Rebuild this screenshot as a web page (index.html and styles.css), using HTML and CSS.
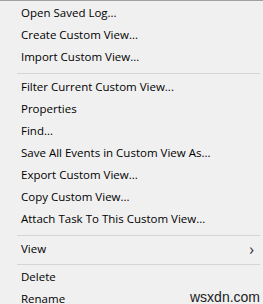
FILE: index.html
```html
<!DOCTYPE html>
<html>
<head>
<title>Context menu</title>
<link rel="stylesheet" href="styles.css">
</head>
<body>
<div class="menu">
	<div class="item">Open Saved Log...</div>
	<div class="item">Create Custom View...</div>
	<div class="item">Import Custom View...</div>
	<div class="sep"></div>
	<div class="item">Filter Current Custom View...</div>
	<div class="item">Properties</div>
	<div class="item">Find...</div>
	<div class="item">Save All Events in Custom View As...</div>
	<div class="item">Export Custom View...</div>
	<div class="item">Copy Custom View...</div>
	<div class="item">Attach Task To This Custom View...</div>
	<div class="sep"></div>
	<div class="item sub">View <span class="arrow">&#8250;</span></div>
	<div class="sep last"></div>
	<div class="item">Delete</div>
	<div class="item">Rename</div>
</div>
<span class="mark">wsxdn.com</span>
</body>
</html>
```

FILE: styles.css
```css
html, body {
	margin: 0px;
	padding: 0px;
	background: #f0f0f0;
	overflow: hidden;
}
body {
	width: 263px;
	height: 304px;
	position: relative;
}
.menu {
	border-top: 1px solid #a0a0a0;
	padding-top: 1px;
	font-family: "Open Sans", sans-serif;
	font-size: 11.5px;
	color: #000;
}
.item {
	height: 22px;
	line-height: 22px;
	padding-left: 21px;
	padding-right: 9px;
	white-space: nowrap;
}
.sub {
	display: flex;
	justify-content: space-between;
}
.arrow {
	font-size: 16px;
	color: #333;
}
.sep {
	height: 1px;
	background: #d5d5d5;
	margin: 5px 3px 2px 17px;
}
.sep.last {
	margin: 4px 3px 1px 17px;
}
.mark {
	position: absolute;
	left: 190px;
	top: 289px;
	font-family: "Liberation Sans", sans-serif;
	font-size: 14px;
	color: #222;
}
```
